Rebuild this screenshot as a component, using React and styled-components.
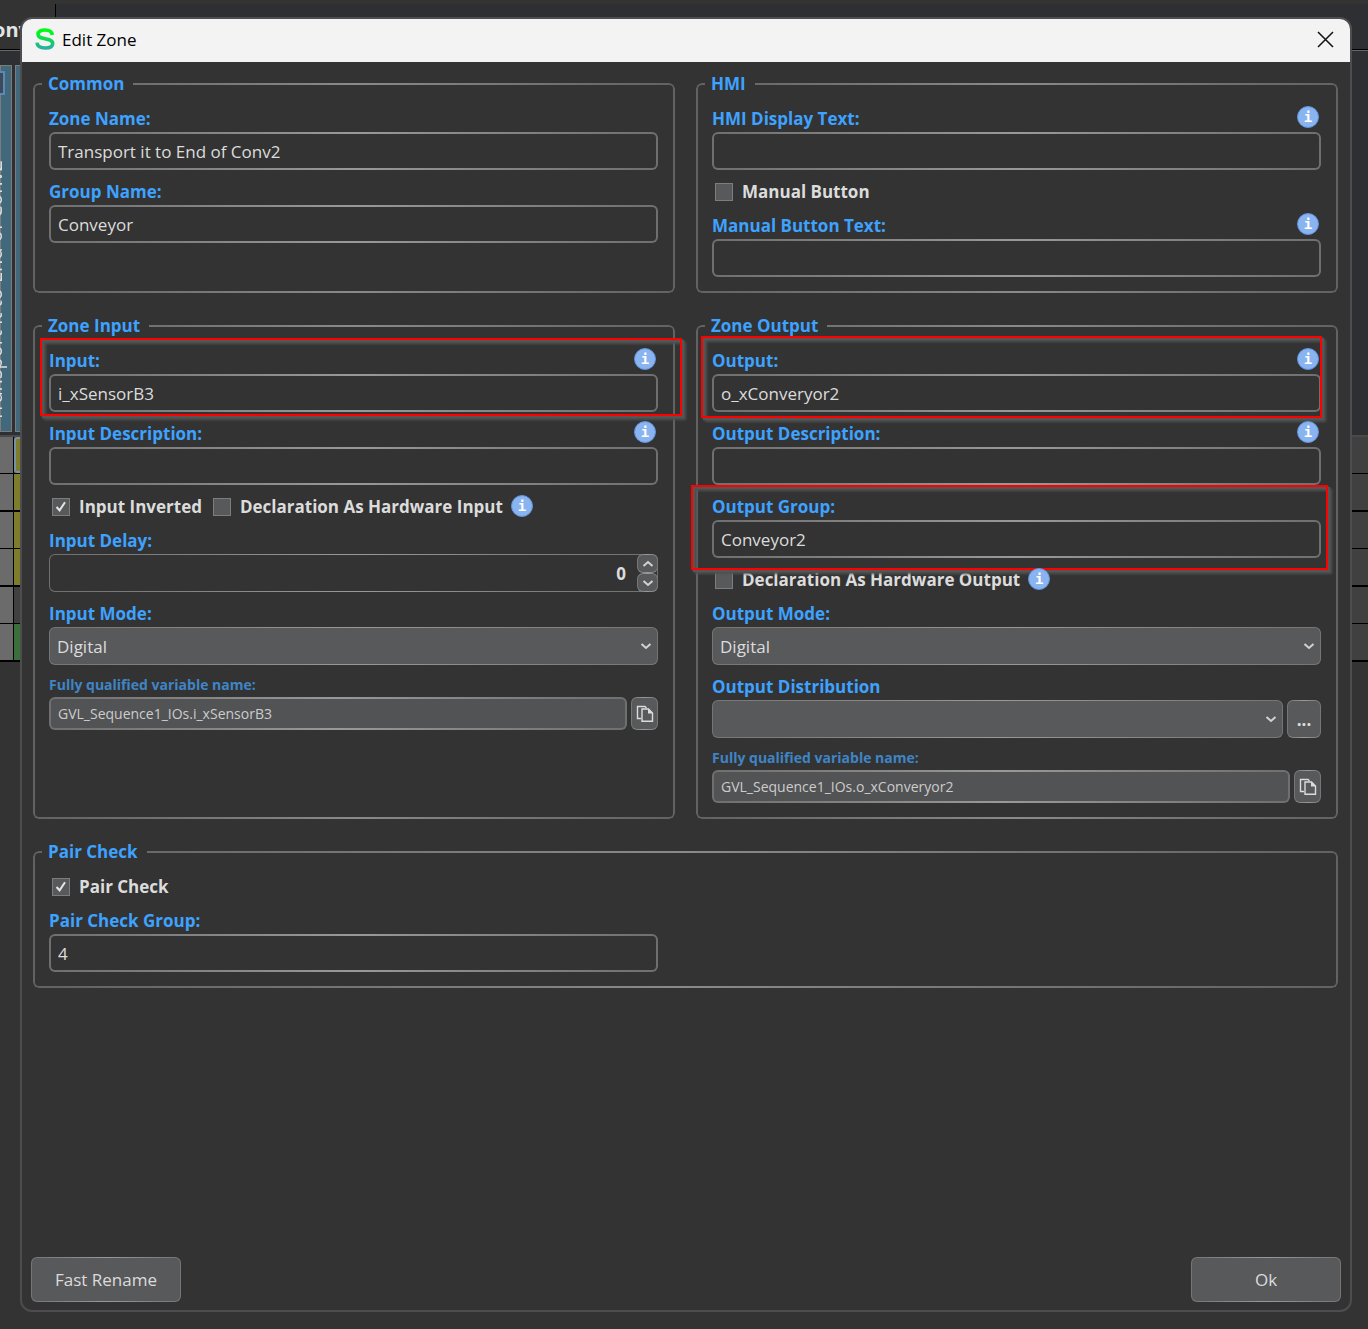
import React, { useId, useState } from 'react'

import styled, { createGlobalStyle } from 'styled-components'

const CheckBox = ({ label, checked = false }) => {
  const [on, setOn] = useState(checked)
  return (
    <CheckLabel>
      <span className='tick-holder'>
        <input type='checkbox' checked={on} onChange={() => setOn(!on)} />
        {on && (
          <svg viewBox='0 0 18 18' aria-hidden='true'>
            <path d='M4.5 9 L7.6 12.3 L13 4.3' />
          </svg>
        )}
      </span>
      {label}
    </CheckLabel>
  )
}

const Info = () => (
  <InfoDot role='img' aria-label='Info'>
    i
  </InfoDot>
)

const Chevron = ({ up }) => (
  <svg width='12' height='8' viewBox='0 0 12 8' aria-hidden='true'>
    <path
      d={up ? 'M1.5 6 L6 2 L10.5 6' : 'M1.5 2 L6 6 L10.5 2'}
      fill='none'
      stroke='#d2d2d2'
      strokeWidth='2'
    />
  </svg>
)

const CopyIcon = () => (
  <svg width='18' height='18' viewBox='0 0 18 18' aria-hidden='true'>
    <path
      d='M5 13.5 H1.5 V1.5 H9 L10.5 3'
      fill='none'
      stroke='#dcdcdc'
      strokeWidth='1.4'
    />
    <path
      d='M6 4 H12.5 L16.5 8 V16.3 H6 Z'
      fill='none'
      stroke='#dcdcdc'
      strokeWidth='1.4'
    />
    <path d='M12 3.5 V8.5 H17 Z' fill='#dcdcdc' />
  </svg>
)

const TextField = ({ label, value = '', info, mark }) => {
  const id = useId()
  return (
    <Field>
      <LabelRow>
        <label htmlFor={id}>{label}</label>
        {info && <Info />}
      </LabelRow>
      <TextInput id={id} type='text' defaultValue={value} />
      {mark && <Mark $edges={mark} />}
    </Field>
  )
}

const SelectField = ({ label, options, more }) => {
  const id = useId()
  return (
    <Field>
      <LabelRow>
        <label htmlFor={id}>{label}</label>
      </LabelRow>
      <InputRow>
        <SelectHolder>
          <select id={id}>
            {options.map((option) => (
              <option key={option}>{option}</option>
            ))}
          </select>
          <Chevron />
        </SelectHolder>
        {more && (
          <IconButton type='button' $width='34px'>
            ...
          </IconButton>
        )}
      </InputRow>
    </Field>
  )
}

const SpinField = ({ label }) => {
  const id = useId()
  const [count, setCount] = useState(0)
  return (
    <Field>
      <LabelRow>
        <label htmlFor={id}>{label}</label>
      </LabelRow>
      <SpinHolder>
        <input
          id={id}
          type='number'
          value={count}
          onChange={(e) => setCount(Number(e.target.value))}
        />
        <div className='steps'>
          <button
            type='button'
            aria-label='Increase'
            onClick={() => setCount(count + 1)}
          >
            <Chevron up />
          </button>
          <button
            type='button'
            aria-label='Decrease'
            onClick={() => setCount(count - 1)}
          >
            <Chevron />
          </button>
        </div>
      </SpinHolder>
    </Field>
  )
}

const QualifiedName = ({ value }) => {
  const id = useId()
  return (
    <Field>
      <LabelRow $small>
        <label htmlFor={id}>Fully qualified variable name:</label>
      </LabelRow>
      <InputRow>
        <TextInput id={id} type='text' value={value} readOnly $small />
        <IconButton type='button' aria-label='Copy' $width='27px'>
          <CopyIcon />
        </IconButton>
      </InputRow>
    </Field>
  )
}

const rows = ['#7d7d2b', '#7d7d2b', '#7d7d2b', '#7d7d2b', '#404040', '#3a6e3a']

const Sequence = () => (
  <Backdrop aria-hidden='true'>
    <div className='strip' />
    <div className='heading'>
      <div className='name'>onv</div>
    </div>
    <div className='zones'>
      <ZoneHead $width='12px'>
        <i />
        <span>Transport it to End of Conv2</span>
      </ZoneHead>
      <ZoneHead $width='38px' />
    </div>
    {rows.map((color, index) => (
      <StepRow
        key={index}
        $color={color}
        $thick={index % 2 === 1}
        $selected={index === 0}
      >
        <span />
        <span className='step' />
      </StepRow>
    ))}
  </Backdrop>
)

const App = () => {
  return (
    <Page>
      <GlobalStyle />
      <Sequence />
      <Dialog role='dialog' aria-labelledby='dialog-title'>
        <TitleBar>
          <svg width='20' height='22' viewBox='0 0 20 22' aria-hidden='true'>
            <defs>
              <linearGradient id='logo' x1='0' y1='0' x2='0' y2='1'>
                <stop offset='0.1' stopColor='#00fb14' />
                <stop offset='1' stopColor='#27b0a0' />
              </linearGradient>
            </defs>
            <path
              d='M17.3 7 C17 3.4 14 2 10 2 C5.8 2 3 3.5 3 6.3 C3 9.2 5.8 9.9 10 10.7 C14.6 11.6 17.7 12.4 17.7 15.5 C17.7 18.5 14.6 20 10.2 20 C5.6 20 2.4 18.5 2 14.6'
              fill='none'
              stroke='url(#logo)'
              strokeWidth='3.6'
            />
          </svg>
          <h1 id='dialog-title'>Edit Zone</h1>
          <button type='button' aria-label='Close'>
            <svg width='17' height='17' viewBox='0 0 17 17' aria-hidden='true'>
              <path d='M1 1 L16 16 M16 1 L1 16' stroke='#111' strokeWidth='1.5' />
            </svg>
          </button>
        </TitleBar>
        <Groups>
          <Group>
            <legend>Common</legend>
            <TextField label='Zone Name:' value='Transport it to End of Conv2' />
            <TextField label='Group Name:' value='Conveyor' />
          </Group>
          <Group>
            <legend>HMI</legend>
            <TextField label='HMI Display Text:' info />
            <CheckRow>
              <CheckBox label='Manual Button' />
            </CheckRow>
            <TextField label='Manual Button Text:' info />
          </Group>
          <Group>
            <legend>Zone Input</legend>
            <TextField
              label='Input:'
              value='i_xSensorB3'
              info
              mark='-1px -24px -4px -9px'
            />
            <TextField label='Input Description:' info />
            <CheckRow>
              <CheckBox label='Input Inverted' checked />
              <CheckBox label='Declaration As Hardware Input' />
              <Info />
            </CheckRow>
            <SpinField label='Input Delay:' />
            <SelectField label='Input Mode:' options={['Digital', 'Analog']} />
            <QualifiedName value='GVL_Sequence1_IOs.i_xSensorB3' />
          </Group>
          <Group>
            <legend>Zone Output</legend>
            <TextField
              label='Output:'
              value='o_xConveryor2'
              info
              mark='-3px -1px -6px -11px'
            />
            <TextField label='Output Description:' info />
            <TextField
              label='Output Group:'
              value='Conveyor2'
              mark='0 -7px -12px -21px'
            />
            <CheckRow>
              <CheckBox label='Declaration As Hardware Output' />
              <Info />
            </CheckRow>
            <SelectField label='Output Mode:' options={['Digital', 'Analog']} />
            <SelectField label='Output Distribution' options={['']} more />
            <QualifiedName value='GVL_Sequence1_IOs.o_xConveryor2' />
          </Group>
          <Group $wide>
            <legend>Pair Check</legend>
            <CheckRow>
              <CheckBox label='Pair Check' checked />
            </CheckRow>
            <TextField label='Pair Check Group:' value='4' />
          </Group>
        </Groups>
        <Footer>
          <PushButton type='button'>Fast Rename</PushButton>
          <PushButton type='button'>Ok</PushButton>
        </Footer>
      </Dialog>
    </Page>
  )
}

const GlobalStyle = createGlobalStyle`
  * {
    box-sizing: border-box;
  }
  body {
    margin: 0;
    background: #333333;
    color: #dcdcdc;
    font-family: 'Open Sans', 'Noto Sans', sans-serif;
    font-size: 17px;
  }
  input, select, button {
    font: inherit;
    color: inherit;
    margin: 0;
  }
`

const Page = styled.main`
  display: grid;
  grid-template-columns: minmax(0, 1fr);
  min-height: 100vh;
  > * {
    grid-area: 1 / 1;
  }
`

const Backdrop = styled.div`
  overflow: hidden;
  background: linear-gradient(#2e2f33 435px, #333333 435px);
  .strip {
    height: 4px;
    background: #333333;
  }
  .heading {
    height: 47px;
    border-bottom: 1px solid #666666;
    box-shadow: inset 0 -1px #000000;
  }
  .name {
    display: flex;
    justify-content: flex-end;
    width: 56px;
    height: 46px;
    padding: 12px 25px 0 0;
    border-right: 1px solid #000000;
    border-bottom: 1px solid #000000;
    background: #333333;
    color: #e4e4e4;
    font-size: 20px;
    font-weight: 700;
    line-height: 28px;
  }
  .zones {
    display: flex;
    gap: 3px;
    padding: 14px 0 3px;
    border-bottom: 2px solid #4a4a4a;
  }
`

const ZoneHead = styled.div`
  display: flex;
  flex-direction: column;
  justify-content: space-between;
  align-items: flex-end;
  width: ${(props) => props.$width};
  height: 367px;
  padding: 5px 6px 9px 0;
  border: 1px solid #7c7c7c;
  background: #42697b;
  i {
    width: 5px;
    height: 24px;
    border: 2px solid #5f87b5;
    border-left: none;
    background: #3d4a5c;
  }
  span {
    writing-mode: vertical-rl;
    transform: rotate(180deg);
    color: #dcdcdc;
    font-size: 20px;
    line-height: 20px;
    white-space: nowrap;
  }
`

const StepRow = styled.div`
  display: flex;
  gap: 1px;
  height: ${(props) => (props.$thick ? '38px' : '37px')};
  border-bottom: ${(props) => (props.$thick ? '2px' : '1px')} solid #000000;
  background: #404040;
  span {
    width: 13px;
    background: #6b6b6b;
    box-shadow: 1px 0 #000000;
  }
  .step {
    width: 38px;
    border: ${(props) => (props.$selected ? '2px solid #7593a5' : 'none')};
    border-radius: ${(props) => (props.$selected ? '3px' : '0')};
    background: ${(props) => props.$color};
  }
`

const Dialog = styled.section`
  display: flex;
  flex-direction: column;
  margin: 17px 16px 17px 20px;
  border: 2px solid #4d4d4f;
  border-radius: 12px;
  background: #333333;
  overflow: hidden;
  z-index: 1;
`

const TitleBar = styled.header`
  display: flex;
  align-items: center;
  gap: 7px;
  height: 43px;
  padding: 0 16px 3px 13px;
  background: #f3f3f3;
  color: #000000;
  h1 {
    flex: 1;
    margin: 0;
    font-size: 17px;
    font-weight: 400;
  }
  button {
    display: flex;
    padding: 0;
    border: none;
    background: none;
  }
`

const Groups = styled.form`
  display: grid;
  grid-template-columns: repeat(2, minmax(0, 1fr));
  gap: 21px;
  padding: 10px 12px 16px 11px;
`

const Group = styled.fieldset`
  grid-column: ${(props) => (props.$wide ? '1 / -1' : 'auto')};
  min-width: 0;
  margin: 0;
  padding: 1px ${(props) => (props.$wide ? 'calc(50% + 26px)' : '15px')} 14px
    14px;
  border: 2px solid transparent;
  border-radius: 6px;
  background: linear-gradient(#333333, #333333) padding-box,
    linear-gradient(90deg, #626262, #8a8a8a, #626262) border-box;

  legend {
    margin-left: -7px;
    padding: 0 9px 0 6px;
    background: #333333;
    color: #3ea2ff;
    font-weight: 700;
    line-height: 24px;
  }
`

const Field = styled.div`
  position: relative;
`

const LabelRow = styled.div`
  display: flex;
  justify-content: space-between;
  align-items: flex-end;
  height: ${(props) => (props.$small ? '32px' : '35px')};
  padding-right: 2px;
  color: ${(props) => (props.$small ? '#3f85c6' : '#3ea2ff')};
  font-size: ${(props) => (props.$small ? '14px' : '17px')};
  font-weight: 700;
  line-height: ${(props) => (props.$small ? '24px' : '27px')};
`

const InfoDot = styled.span`
  position: relative;
  z-index: 2;
  width: 22px;
  height: 22px;
  margin-bottom: 4px;
  border: 1px solid #5f93dc;
  border-radius: 50%;
  background: #8ab4f0;
  color: #ffffff;
  font-family: 'DejaVu Sans Mono', monospace;
  font-size: 14px;
  font-weight: 700;
  line-height: 20px;
  text-align: center;
`

const edge = 'linear-gradient(90deg, #6f6f6f, #999999, #6f6f6f) border-box'

const TextInput = styled.input`
  display: block;
  width: 100%;
  height: ${(props) => (props.$small ? '33px' : '38px')};
  padding: 0 7px;
  border: 2px solid transparent;
  border-radius: 6px;
  background: ${(props) =>
      props.$small
        ? 'linear-gradient(#525355, #525355)'
        : 'linear-gradient(#333333, #333333)'}
      padding-box,
    ${edge};
  color: ${(props) => (props.$small ? '#cccccc' : '#dcdcdc')};
  font-size: ${(props) => (props.$small ? '14px' : '17px')};
`

const InputRow = styled.div`
  display: flex;
  gap: 4px;
`

const raised = `
  border: 1px solid transparent;
  border-radius: 6px;
  background: linear-gradient(#58595b, #58595b) padding-box,
    linear-gradient(90deg, #757575, #999999, #757575) border-box;
`

const SelectHolder = styled.div`
  display: grid;
  flex: 1;
  align-items: center;
  select {
    grid-area: 1 / 1;
    width: 100%;
    height: 38px;
    padding: 0 30px 0 7px;
    appearance: none;
    ${raised}
  }
  svg {
    grid-area: 1 / 1;
    justify-self: end;
    margin-right: 6px;
    pointer-events: none;
  }
`

const IconButton = styled.button`
  display: flex;
  flex: none;
  justify-content: center;
  align-items: center;
  width: ${(props) => props.$width};
  padding: 0;
  font-weight: 700;
  ${raised}
`

const SpinHolder = styled.div`
  display: flex;
  height: 38px;
  border: 1px solid transparent;
  border-radius: 6px;
  background: linear-gradient(#333333, #333333) padding-box, ${edge};
  input {
    flex: 1;
    min-width: 0;
    padding: 0 12px;
    border: none;
    background: none;
    font-weight: 700;
    text-align: right;
    appearance: textfield;
  }
  input::-webkit-inner-spin-button {
    appearance: none;
  }
  .steps {
    display: flex;
    flex-direction: column;
    width: 21px;
    margin: -1px;
  }
  button {
    display: flex;
    flex: 1;
    justify-content: center;
    align-items: center;
    padding: 0;
    ${raised}
  }
`

const CheckRow = styled.div`
  display: flex;
  align-items: flex-end;
  gap: 11px;
  height: 34px;
  padding-left: 3px;
  ${InfoDot} {
    margin: 0 0 2px -3px;
  }
`

const CheckLabel = styled.label`
  display: flex;
  align-items: center;
  gap: 9px;
  font-weight: 700;
  line-height: 25px;
  white-space: nowrap;
  .tick-holder {
    display: grid;
  }
  input {
    grid-area: 1 / 1;
    width: 18px;
    height: 18px;
    border: 1px solid #7d7d7d;
    background: #58595b;
    appearance: none;
  }
  svg {
    grid-area: 1 / 1;
    width: 18px;
    height: 18px;
    fill: none;
    stroke: #e6e6e6;
    stroke-width: 2;
    pointer-events: none;
  }
`

/* red outline over a field that needs attention */
const Mark = styled.div`
  position: absolute;
  inset: ${(props) => props.$edges};
  z-index: 1;
  border: 2px solid #ff0000;
  filter: drop-shadow(2px 2px 0 #555555) drop-shadow(2px 2px 1px #505050);
  pointer-events: none;
`

const Footer = styled.footer`
  display: flex;
  justify-content: space-between;
  margin-top: auto;
  padding: 0 9px 8px;
`

const PushButton = styled.button`
  width: 150px;
  height: 45px;
  ${raised}
`

export default App
